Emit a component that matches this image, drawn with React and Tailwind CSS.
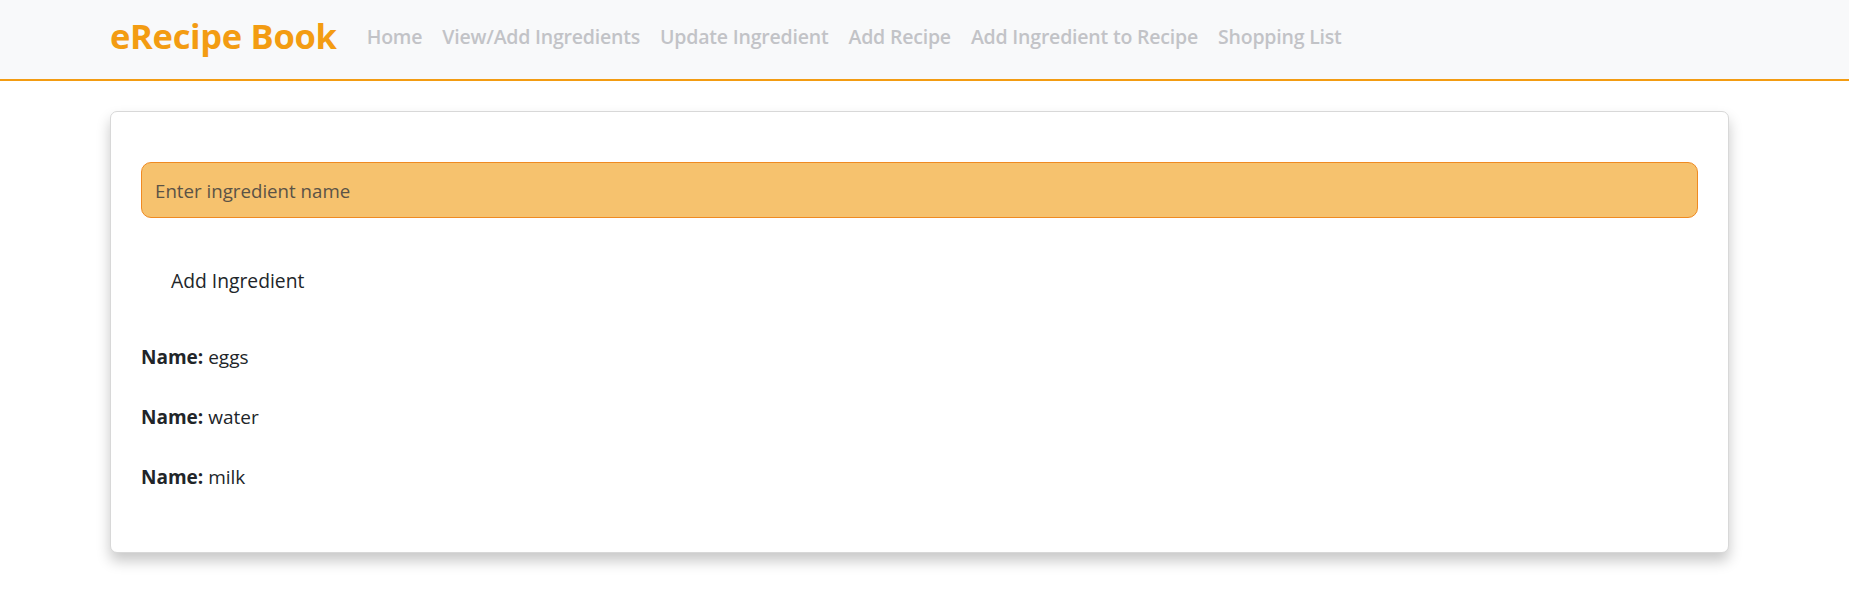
import React, { useState } from 'react';

const navLinks = [
  'Home',
  'View/Add Ingredients',
  'Update Ingredient',
  'Add Recipe',
  'Add Ingredient to Recipe',
  'Shopping List',
];

const App = () => {
  const [nombre, setNombre] = useState('');
  const [ingredientes, setIngredientes] = useState(['eggs', 'water', 'milk']);

  const agregar = () => {
    if (!nombre.trim()) return;
    setIngredientes(prev => [...prev, nombre.trim()]);
    setNombre('');
  };

  return (
    <div className="min-h-[606px] bg-white text-[#212529]" style={{ fontFamily: '"Open Sans", "Noto Sans", sans-serif' }}>
      {/* Navbar */}
      <nav className="h-[81px] bg-[#f8f9fa] border-b-2 border-[#f39c12] flex items-center pl-[110px] pb-[6px]">
        <span className="text-[34.5px] font-bold text-[#f39c12] tracking-[-0.3px] mr-[30px] leading-none">eRecipe Book</span>
        <div className="flex items-center gap-[20px]">
          {navLinks.map(l => (
            <a key={l} className="text-[19.5px] font-semibold text-[#c2c3c7] tracking-[-0.2px] cursor-pointer">{l}</a>
          ))}
        </div>
      </nav>

      {/* Card */}
      <div className="pl-[110px] pt-[30px]">
        <div className="w-[1619px] bg-white border border-[#d8d8d8] rounded-[7px] shadow-[0_8px_14px_rgba(0,0,0,0.22)] px-[30px] pt-[50px] pb-[60px]">
          <input
            type="text"
            value={nombre}
            onChange={e => setNombre(e.target.value)}
            placeholder="Enter ingredient name"
            className="w-full h-[56px] bg-[#f6c26e] border border-[#ef8a22] rounded-[10px] px-[13px] text-[18.7px] placeholder:text-[#5b5346] outline-none"
          />
          <button
            type="button"
            onClick={agregar}
            className="mt-[48px] ml-[30px] text-[19.3px] text-[#212529] leading-[30px] bg-transparent"
          >
            Add Ingredient
          </button>
          <div className="mt-[46px] flex flex-col gap-[30px]">
            {ingredientes.map((ing, i) => (
              <p key={i} className="text-[19px] leading-[30px]">
                <b className="font-bold">Name:</b> {ing}
              </p>
            ))}
          </div>
        </div>
      </div>
    </div>
  );
};

export default App;
